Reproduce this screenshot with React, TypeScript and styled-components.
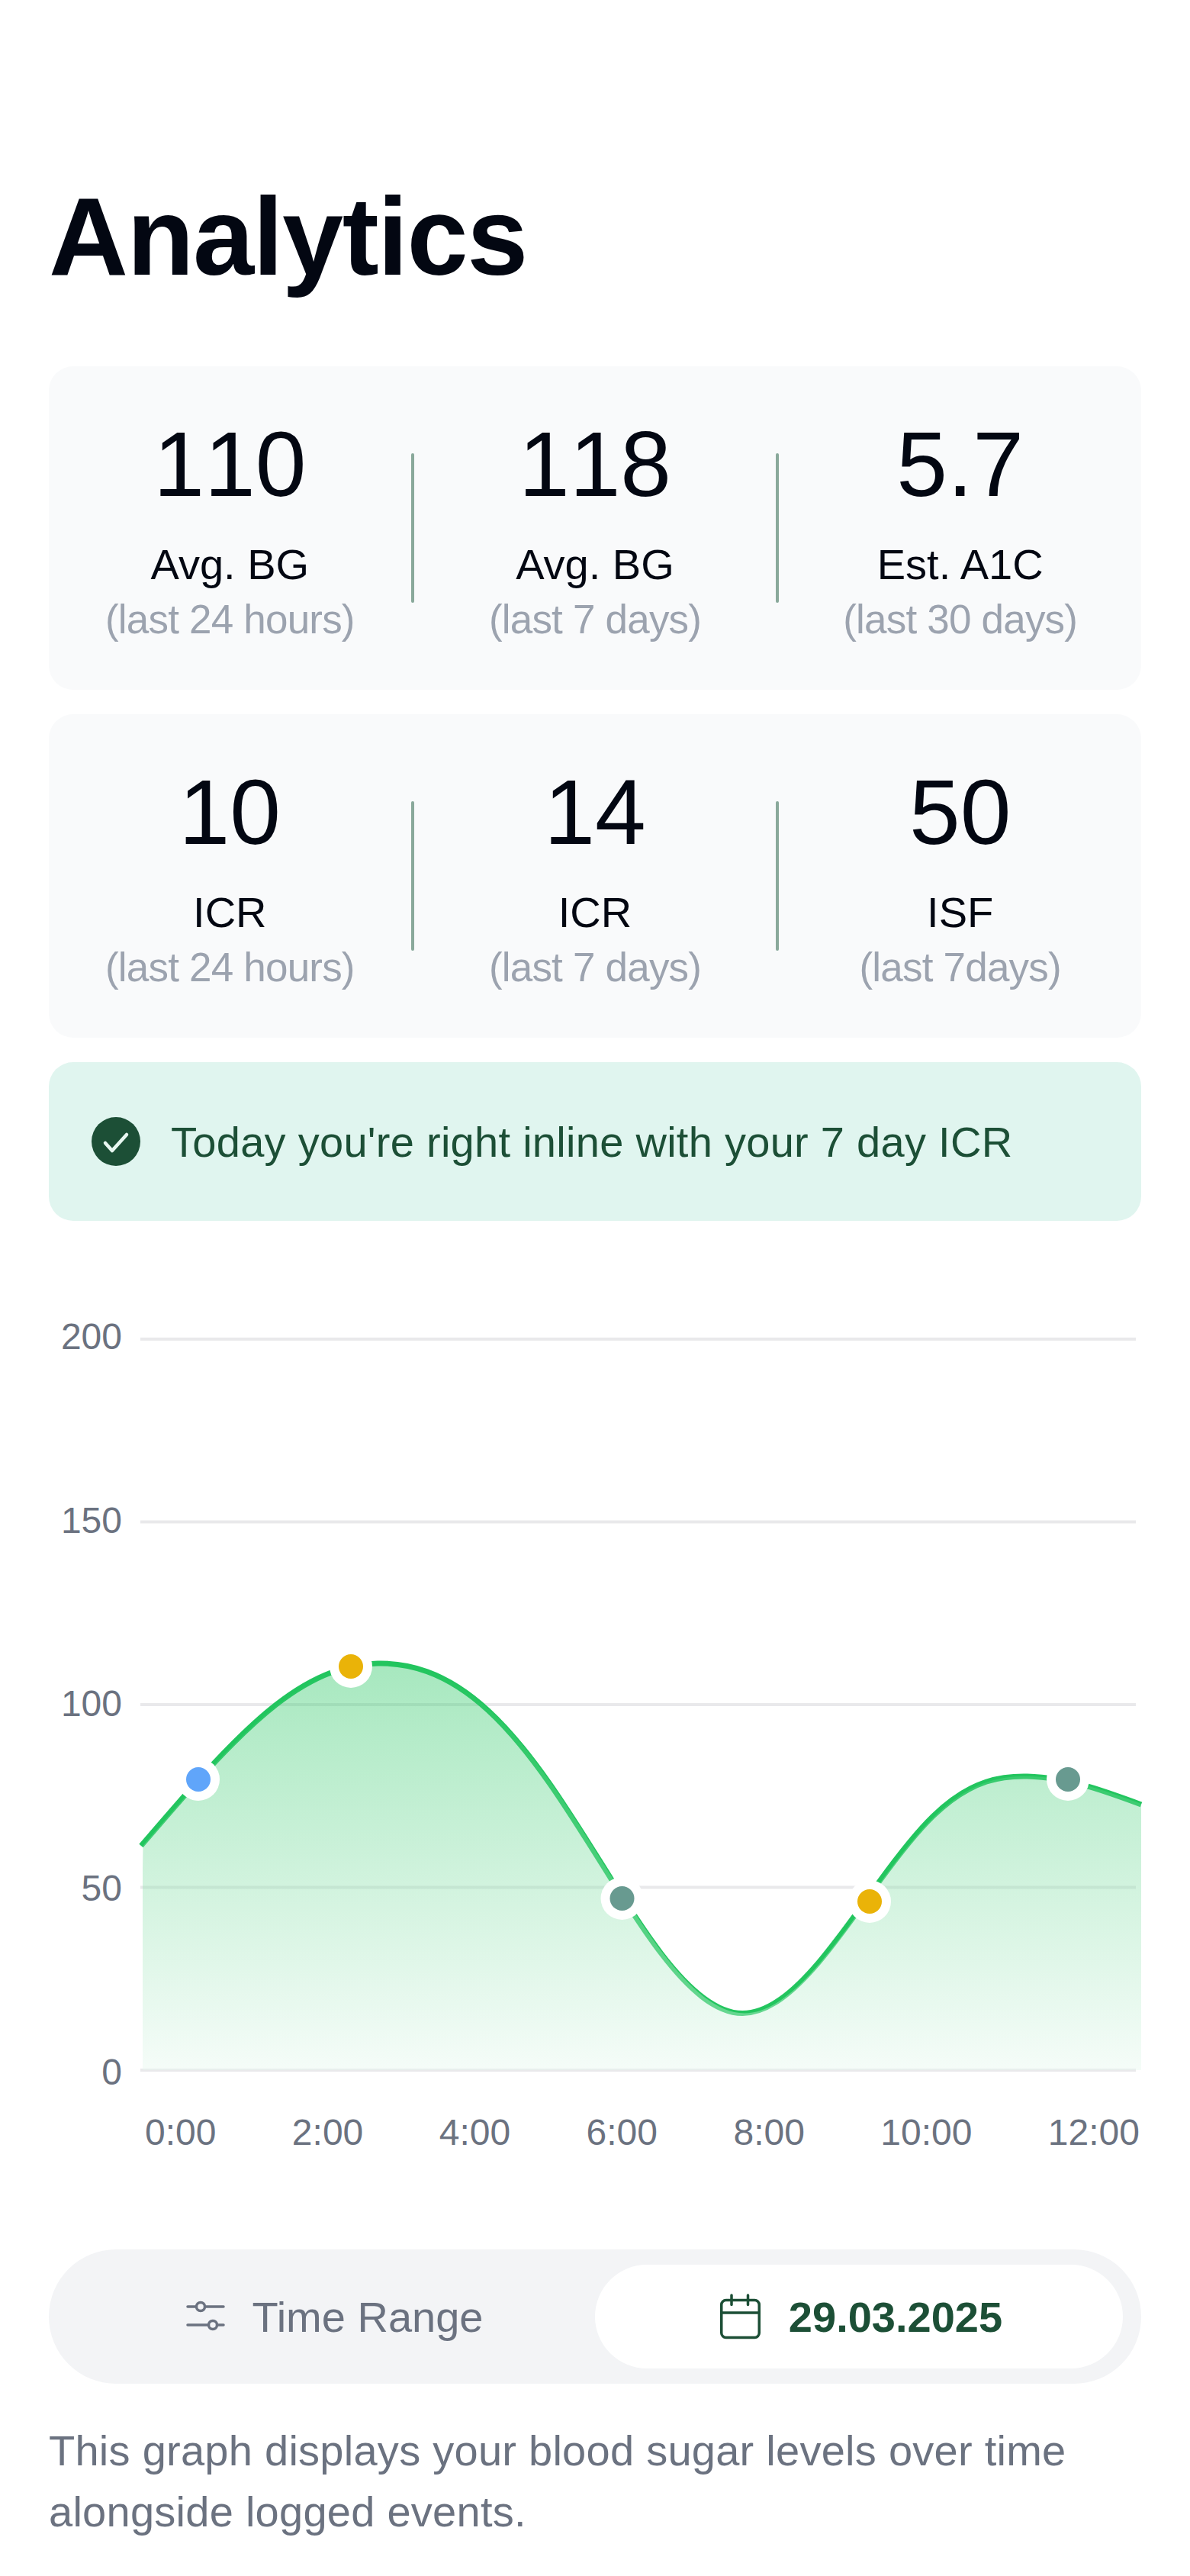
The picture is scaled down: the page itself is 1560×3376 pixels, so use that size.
import React from "react";
import styled, { createGlobalStyle } from "styled-components";

const Global = createGlobalStyle`
  html, body { margin: 0; padding: 0; background: #fff; }
  body { font-family: "Liberation Sans", Arial, sans-serif; }
`;

const Page = styled.main`
  width: 1560px;
  min-height: 3376px;
  box-sizing: border-box;
  padding: 231px 64px 0;
  background: #fff;
`;
const Title = styled.h1`
  margin: 0 0 89px;
  font-size: 144px;
  line-height: 160px;
  font-weight: 700;
  letter-spacing: -1.5px;
  color: #030712;
`;
const StatCard = styled.section`
  display: flex;
  align-items: center;
  padding: 56px 0;
  margin-bottom: 32px;
  background: #f9fafb;
  border-radius: 32px;
`;
const Stat = styled.div`
  flex: 1;
  text-align: center;
`;
const Value = styled.div`
  font-size: 120px;
  line-height: 144px;
  margin-bottom: 24px;
  font-kerning: none;
  color: #030712;
`;
const Label = styled.div`
  font-size: 56px;
  line-height: 72px;
  color: #030712;
`;
const Period = styled.div`
  font-size: 53px;
  line-height: 72px;
  letter-spacing: -0.8px;
  color: #9ca3af;
`;
const Divider = styled.div`
  flex: none;
  width: 4px;
  height: 196px;
  border-radius: 2px;
  background: #8aa99b;
`;
const Alert = styled.div`
  display: flex;
  align-items: center;
  gap: 40px;
  height: 208px;
  box-sizing: border-box;
  padding: 0 56px;
  background: #e0f5ef;
  border-radius: 32px;
  font-size: 56px;
  letter-spacing: 0.28px;
  color: #1c4f36;
`;
const ChartSvg = styled.svg`
  display: block;
  margin-top: 100px;
  overflow: visible;
`;
const AxisText = styled.text`
  font-size: 48px;
  fill: #6b7280;
`;
const XAxis = styled.div`
  display: flex;
  justify-content: space-between;
  margin: 27px 2px 0 126px;
  font-size: 48px;
  line-height: 56px;
  color: #6b7280;
`;
const Toggle = styled.div`
  display: grid;
  grid-template-columns: 1fr 1fr;
  margin-top: 125px;
  padding: 20px 24px;
  background: #f3f4f6;
  border-radius: 88px;
`;
const Tab = styled.div<{ $active?: boolean }>`
  display: flex;
  align-items: center;
  justify-content: center;
  gap: ${(p) => (p.$active ? 32 : 34)}px;
  height: 136px;
  padding-left: ${(p) => (p.$active ? 0 : 6)}px;
  border-radius: 68px;
  font-size: 56px;
  font-weight: ${(p) => (p.$active ? 700 : 400)};
  color: ${(p) => (p.$active ? "#1c4f36" : "#6b7280")};
  background: ${(p) => (p.$active ? "#fff" : "transparent")};
`;
const Description = styled.p`
  margin: 48px 0 0;
  font-size: 56px;
  line-height: 80px;
  letter-spacing: 0.26px;
  color: #6b7280;
`;

const stats = [
  [
    ["110", "Avg. BG", "(last 24 hours)"],
    ["118", "Avg. BG", "(last 7 days)"],
    ["5.7", "Est. A1C", "(last 30 days)"],
  ],
  [
    ["10", "ICR", "(last 24 hours)"],
    ["14", "ICR", "(last 7 days)"],
    ["50", "ISF", "(last 7days)"],
  ],
];

// knots of the glucose curve, in page coordinates
const knots: [number, number][] = [
  [185, 2419],
  [260, 2333],
  [362, 2234],
  [434, 2192],
  [495, 2180],
  [560, 2190.7],
  [640, 2241.7],
  [720, 2336.7],
  [801.7, 2463.3],
  [866.7, 2560],
  [973.3, 2638.5],
  [1073.3, 2571.7],
  [1153.3, 2465],
  [1223.3, 2380],
  [1293.3, 2335],
  [1346.7, 2328],
  [1428, 2341.7],
  [1496, 2365],
];

// natural cubic spline through the knots, written as bezier segments
function splinePath(pts: [number, number][]) {
  const n = pts.length - 1;
  const h = pts.slice(1).map((p, i) => p[0] - pts[i][0]);
  const s = pts.slice(1).map((p, i) => (p[1] - pts[i][1]) / h[i]);
  const c = new Array(n + 1).fill(0);
  const r = new Array(n + 1).fill(0);
  for (let i = 1; i < n; i++) {
    const m = 2 * (h[i - 1] + h[i]) - h[i - 1] * c[i - 1];
    c[i] = h[i] / m;
    r[i] = (6 * (s[i] - s[i - 1]) - h[i - 1] * r[i - 1]) / m;
  }
  const M = new Array(n + 1).fill(0);
  for (let i = n - 1; i > 0; i--) M[i] = r[i] - c[i] * M[i + 1];
  let d = `M${pts[0][0]} ${pts[0][1]}`;
  for (let i = 0; i < n; i++) {
    const [x0, y0] = pts[i];
    const [x1, y1] = pts[i + 1];
    const d0 = s[i] - (h[i] * (2 * M[i] + M[i + 1])) / 6;
    const d1 = s[i] + (h[i] * (M[i] + 2 * M[i + 1])) / 6;
    const t = h[i] / 3;
    d += ` C${x0 + t} ${y0 + d0 * t} ${x1 - t} ${y1 - d1 * t} ${x1} ${y1}`;
  }
  return d;
}

const linePath = splinePath(knots);

// value, grid line y, label baseline y
const gridLines = [
  [200, 1755, 1768],
  [150, 1994.5, 2008.5],
  [100, 2234, 2249],
  [50, 2473.5, 2490.5],
  [0, 2713, 2732],
];

const markers = [
  [260, 2332, "#60a5fa"],
  [460, 2184, "#eab308"],
  [815.5, 2488, "#689a90"],
  [1140, 2492, "#eab308"],
  [1400, 2332, "#689a90"],
] as const;

const CheckIcon = () => (
  <svg width="64" height="64" viewBox="0 0 64 64" style={{ flex: "none" }}>
    <circle cx="32" cy="32" r="32" fill="#1c4f36" />
    <path d="M18 34l9 10 19-21" fill="none" stroke="#e8f7f1" strokeWidth="4.5" strokeLinecap="round" strokeLinejoin="round" />
  </svg>
);

const SlidersIcon = () => (
  <svg width="56" height="56" viewBox="0 0 56 56" fill="none" stroke="#6b7280" strokeWidth="3.5" strokeLinecap="round">
    <path d="M5 15h11M28 15h24M5 39h27M44 39h8" />
    <circle cx="22" cy="15" r="5.5" />
    <circle cx="38" cy="39" r="5.5" />
  </svg>
);

const CalendarIcon = () => (
  <svg width="64" height="64" viewBox="0 0 64 64" fill="none" stroke="#1c4f36" strokeWidth="3.5" strokeLinecap="round">
    <rect x="7.75" y="10.5" width="49.5" height="49" rx="6" />
    <path d="M21 4v12.5M42.5 4v12.5M7.75 27h49.5" />
  </svg>
);

export default function App() {
  return (
    <Page>
      <Global />
      <Title>Analytics</Title>
      {stats.map((row, r) => (
        <StatCard key={r}>
          {row.map(([value, label, period], i) => (
            <React.Fragment key={i}>
              {i > 0 && <Divider />}
              <Stat>
                <Value>{value}</Value>
                <Label>{label}</Label>
                <Period>{period}</Period>
              </Stat>
            </React.Fragment>
          ))}
        </StatCard>
      ))}
      <Alert>
        <CheckIcon />
        Today you're right inline with your 7 day ICR
      </Alert>
      <ChartSvg width="1432" height="1040" viewBox="64 1700 1432 1040">
        <defs>
          <linearGradient id="area" gradientUnits="userSpaceOnUse" x1="0" y1="2180" x2="0" y2="2713">
            <stop offset="0" stopColor="#22c55e" />
            <stop offset="1" stopColor="#e6f8ee" />
          </linearGradient>
          <clipPath id="plot">
            <rect x="187" y="2100" width="1309" height="613" />
          </clipPath>
        </defs>
        {gridLines.map(([v, y, base]) => (
          <g key={v}>
            <line x1="184" x2="1489" y1={y} y2={y} stroke="#e9e9eb" strokeWidth="4" />
            <AxisText x="160" y={base} textAnchor="end">{v}</AxisText>
          </g>
        ))}
        <path d={linePath} fill="none" stroke="#22c55e" strokeWidth="7" />
        <g clipPath="url(#plot)">
          <path
            d={`${linePath} L1500 2713 L180 2713 Z`}
            transform="translate(2.5 0)"
            fill="url(#area)"
            fillOpacity="0.4"
          />
        </g>
        {markers.map(([x, y, c]) => (
          <g key={x}>
            <circle cx={x} cy={y} r="28" fill="#fff" />
            <circle cx={x} cy={y} r="16" fill={c} />
          </g>
        ))}
      </ChartSvg>
      <XAxis>
        {["0:00", "2:00", "4:00", "6:00", "8:00", "10:00", "12:00"].map((t) => (
          <span key={t}>{t}</span>
        ))}
      </XAxis>
      <Toggle>
        <Tab>
          <SlidersIcon />
          Time Range
        </Tab>
        <Tab $active>
          <CalendarIcon />
          29.03.2025
        </Tab>
      </Toggle>
      <Description>
        This graph displays your blood sugar levels over time alongside logged events.
      </Description>
    </Page>
  );
}
